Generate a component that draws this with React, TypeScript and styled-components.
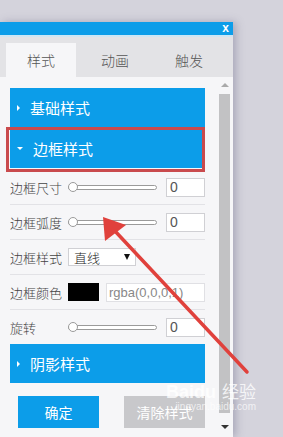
import React from 'react'
import styled, { createGlobalStyle } from 'styled-components'

const GlobalStyle = createGlobalStyle`
  html, body {
    margin: 0;
    padding: 0;
    background: #d4d3dc;
    overflow: hidden;
  }
  body {
    font-family: "Noto Sans CJK SC", "Noto Sans", sans-serif;
  }
`

const BLUE = '#0c9de9'

const Page = styled.div`
  position: relative;
  width: 283px;
  height: 437px;
  padding-top: 22px;
  box-sizing: border-box;
  overflow: hidden;
`

const Panel = styled.div`
  width: 233px;
  background: #f6f6f8;
  box-shadow: 3px 0 8px rgba(90, 85, 120, 0.35);
`

const TitleBar = styled.div`
  height: 13px;
  background: ${BLUE};
  border-bottom: 2px solid #cde6f4;
  display: flex;
  justify-content: flex-end;
  align-items: center;
  padding-right: 4px;
  color: #fff;
  font-family: "Liberation Sans", sans-serif;
  font-weight: bold;
  font-size: 12px;
  line-height: 13px;
`

const TabBar = styled.div`
  height: 34px;
  padding: 6px 0 0 6px;
  background: #e3e3e6;
  display: flex;
  gap: 4px;
`

const Tab = styled.div<{ $active?: boolean }>`
  width: 70px;
  height: 34px;
  display: flex;
  align-items: center;
  justify-content: center;
  font-size: 14px;
  font-weight: 300;
  color: #555;
  background: ${(p) => (p.$active ? '#f6f6f8' : 'transparent')};
`

const Body = styled.div`
  display: flex;
  height: 360px;
`

const Content = styled.div`
  width: 195px;
  padding: 11px 13px 0 10px;
`

const ScrollBar = styled.div`
  width: 13px;
  display: flex;
  flex-direction: column;
  align-items: center;
  padding-top: 6px;
`

const ScrollArrow = styled.div<{ $down?: boolean }>`
  width: 0;
  height: 0;
  border-left: 4px solid transparent;
  border-right: 4px solid transparent;
  ${(p) =>
    p.$down
      ? 'border-top: 4px solid #333; margin-top: 12px;'
      : 'border-bottom: 4px solid #aaa;'}
`

const Thumb = styled.div`
  width: 11px;
  height: 319px;
  margin-top: 7px;
  background: #c2c2c4;
`

const SectionHeader = styled.div`
  height: 39px;
  margin-bottom: 2px;
  background: ${BLUE};
  color: #fff;
  font-size: 15px;
  display: flex;
  align-items: center;
  padding-left: 7px;
  gap: 10px;
`

const Caret = styled.span<{ $open?: boolean }>`
  width: 0;
  height: 0;
  ${(p) =>
    p.$open
      ? `border-left: 3px solid transparent;
         border-right: 3px solid transparent;
         border-top: 3px solid #fff;`
      : `border-top: 3px solid transparent;
         border-bottom: 3px solid transparent;
         border-left: 3px solid #fff;`}
`

const Row = styled.div<{ $last?: boolean }>`
  height: 34px;
  border-bottom: ${(p) => (p.$last ? 'none' : '1px solid #e2e2e6')};
  display: flex;
  align-items: center;
`

const Label = styled.span`
  width: 58px;
  font-size: 13px;
  font-weight: 300;
  color: #444;
  flex-shrink: 0;
`

const Slider = styled.div`
  position: relative;
  width: 89px;
  height: 5px;
  border: 1px solid #9a9a9a;
  border-radius: 4px;
  background: #fff;
  box-sizing: border-box;
`

const Knob = styled.span`
  position: absolute;
  left: -1px;
  top: -4px;
  width: 10px;
  height: 10px;
  border-radius: 50%;
  border: 1px solid #9a9a9a;
  background: #fff;
  box-sizing: border-box;
`

const NumberBox = styled.div`
  width: 39px;
  height: 19px;
  margin-left: auto;
  border: 1px solid #d0d0d4;
  background: #fff;
  box-sizing: border-box;
  font-family: "Liberation Sans", sans-serif;
  font-size: 14px;
  color: #555;
  line-height: 17px;
  padding-left: 3px;
`

const Select = styled.div`
  width: 68px;
  height: 18px;
  border: 1px solid #d0d0d4;
  background: #fff;
  box-sizing: border-box;
  display: flex;
  align-items: center;
  justify-content: space-between;
  padding: 0 5px;
  font-size: 13px;
  font-weight: 300;
  color: #222;
`

const SelectArrow = styled.span`
  width: 0;
  height: 0;
  border-left: 3px solid transparent;
  border-right: 3px solid transparent;
  border-top: 6px solid #111;
`

const Swatch = styled.div`
  width: 31px;
  height: 18px;
  background: #000;
  flex-shrink: 0;
`

const ColorText = styled.div`
  flex: 1;
  height: 19px;
  margin-left: 7px;
  border: 1px solid #e0e0e4;
  background: #fff;
  box-sizing: border-box;
  font-family: "Liberation Sans", sans-serif;
  font-size: 13px;
  color: #888;
  line-height: 17px;
  padding-left: 2px;
`

const Buttons = styled.div`
  display: flex;
  justify-content: space-between;
  padding-left: 8px;
  margin-top: 13px;
`

const Button = styled.div<{ $gray?: boolean }>`
  width: 81px;
  height: 32px;
  background: ${(p) => (p.$gray ? '#c8c8cb' : BLUE)};
  color: #fff;
  font-size: 14px;
  display: flex;
  align-items: center;
  justify-content: center;
`

const RedBox = styled.div`
  position: absolute;
  left: 6px;
  top: 127px;
  width: 199px;
  height: 45px;
  border: 3px solid #c94a4d;
  box-sizing: border-box;
  pointer-events: none;
`

const Overlay = styled.svg`
  position: absolute;
  left: 0;
  top: 0;
  pointer-events: none;
`

const Watermark = styled.div`
  position: absolute;
  left: 166px;
  top: 378px;
  width: 90px;
  color: rgba(255, 255, 255, 0.8);
  font-family: "Liberation Sans", sans-serif;
  pointer-events: none;
`

const WatermarkMain = styled.div`
  display: flex;
  align-items: baseline;
  justify-content: space-between;
  font-size: 18px;
  font-weight: bold;
`

const WatermarkCn = styled.span`
  font-family: "Noto Sans CJK SC", sans-serif;
  font-weight: normal;
  font-size: 17px;
`

const WatermarkSub = styled.div`
  font-size: 10px;
  margin-top: -2px;
  text-align: right;
  color: rgba(255, 255, 255, 0.7);
`

const SliderRow = ({ label, last }: { label: string; last?: boolean }) => (
  <Row $last={last}>
    <Label>{label}</Label>
    <Slider>
      <Knob />
    </Slider>
    <NumberBox>0</NumberBox>
  </Row>
)

export default function App() {
  return (
    <Page>
      <GlobalStyle />
      <Panel>
        <TitleBar>x</TitleBar>
        <TabBar>
          <Tab $active>样式</Tab>
          <Tab>动画</Tab>
          <Tab>触发</Tab>
        </TabBar>
        <Body>
          <Content>
            <SectionHeader>
              <Caret />
              基础样式
            </SectionHeader>
            <SectionHeader>
              <Caret $open />
              边框样式
            </SectionHeader>
            <SliderRow label="边框尺寸" />
            <SliderRow label="边框弧度" />
            <Row>
              <Label>边框样式</Label>
              <Select>
                直线
                <SelectArrow />
              </Select>
            </Row>
            <Row>
              <Label>边框颜色</Label>
              <Swatch />
              <ColorText>rgba(0,0,0,1)</ColorText>
            </Row>
            <SliderRow label="旋转" last />
            <SectionHeader>
              <Caret />
              阴影样式
            </SectionHeader>
            <Buttons>
              <Button>确定</Button>
              <Button $gray>清除样式</Button>
            </Buttons>
          </Content>
          <ScrollBar>
            <ScrollArrow />
            <Thumb />
            <ScrollArrow $down />
          </ScrollBar>
        </Body>
      </Panel>
      <RedBox />
      <Watermark>
        <WatermarkMain>
          Baidu
          <WatermarkCn>经验</WatermarkCn>
        </WatermarkMain>
        <WatermarkSub>jingyan.baidu.com</WatermarkSub>
      </Watermark>
      <Overlay width="283" height="437" viewBox="0 0 283 437">
        <line
          x1="247"
          y1="372"
          x2="114"
          y2="230"
          stroke="#e0413c"
          strokeWidth="3.5"
          strokeLinecap="round"
        />
        <polygon points="103,217 105,241 126,225" fill="#e0413c" />
      </Overlay>
    </Page>
  )
}
